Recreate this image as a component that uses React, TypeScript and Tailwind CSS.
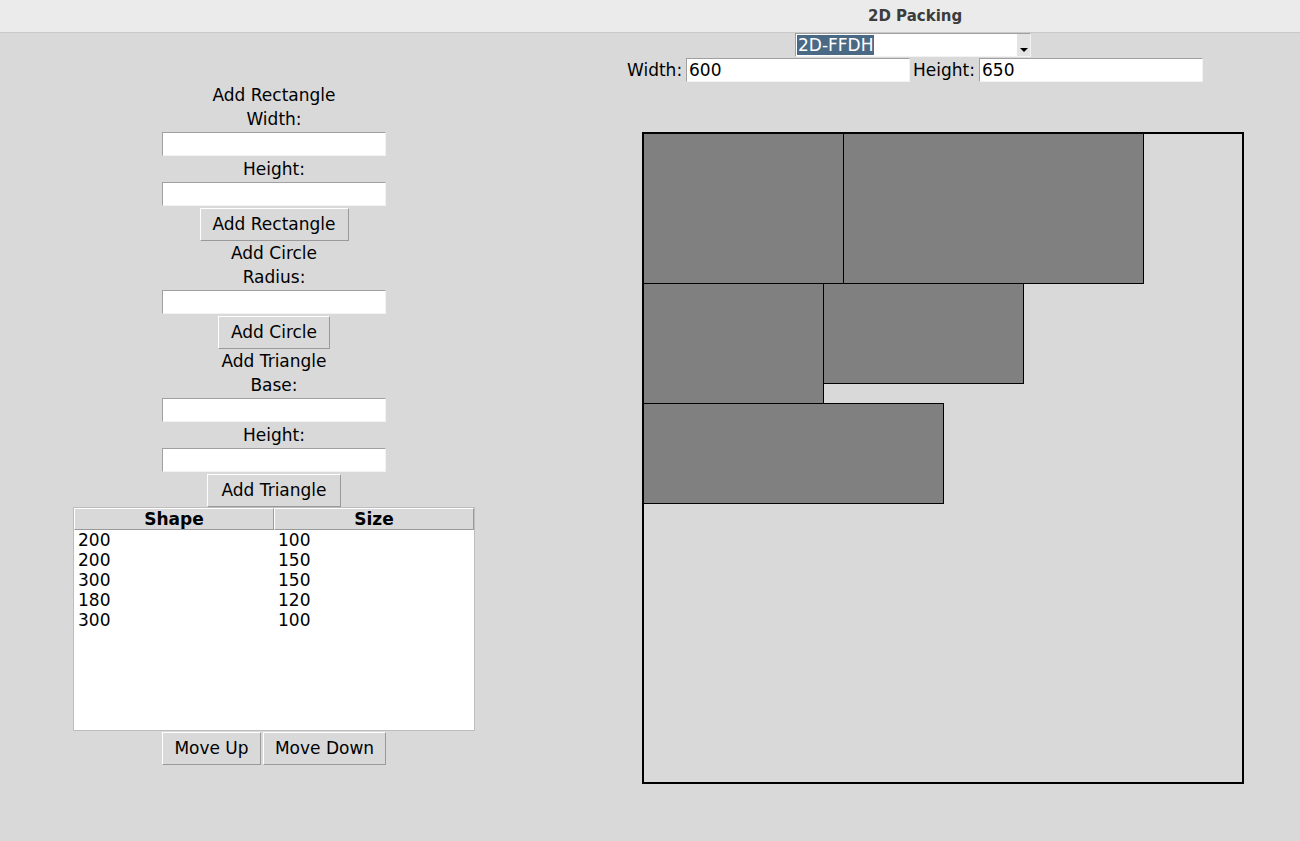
const rects = [
 { x: 1.5, y: 1.5, w: 200, h: 150 },
 { x: 201.5, y: 1.5, w: 300, h: 150 },
 { x: 1.5, y: 151.5, w: 180, h: 120 },
 { x: 181.5, y: 151.5, w: 200, h: 100 },
 { x: 1.5, y: 271.5, w: 300, h: 100 },
]

const rows = [
 ["200", "100"],
 ["200", "150"],
 ["300", "150"],
 ["180", "120"],
 ["300", "100"],
]

function Label({ text }: { text: string }){
 return <div className="h-[24px] flex items-center justify-center leading-none pt-[1px]">{text}</div>
}

function Entry({ value = "", width = "w-[224px]" }: { value?: string, width?: string }){
 return(
  <div className={`${width} h-[24px] shrink-0 bg-white border border-t-[#a0a0a0] border-l-[#a0a0a0] border-r-[#f2f2f2] border-b-[#f2f2f2] flex items-center px-[2px] leading-none`}>
   {value}
  </div>
 )
}

function Field(){
 return(
  <div className="h-[26px] flex items-center justify-center">
   <Entry />
  </div>
 )
}

function Btn({ text, width }: { text: string, width: string }){
 return(
  <div className={`${width} h-[33px] bg-[#d9d9d9] border border-t-white border-l-white border-r-[#9a9a9a] border-b-[#9a9a9a] flex items-center justify-center leading-none`}>
   {text}
  </div>
 )
}

export default function App(){

 return(

  <div className="w-[1300px] h-[841px] bg-[#d9d9d9] flex flex-col text-[17px] text-black overflow-hidden" style={{ fontFamily: '"DejaVu Sans", sans-serif' }}>

   <div className="h-[33px] shrink-0 bg-[#ebebeb] border-b border-[#c9c9c9] flex items-center pl-[868px]">
    <span className="font-bold text-[15px] text-[#3c3c3c] leading-none">2D Packing</span>
   </div>

   <div className="flex flex-1">

    {/* left side: shape inputs + list */}
    <div className="ml-[73px] w-[402px] pt-[50px] flex flex-col items-center">

     <Label text="Add Rectangle" />
     <Label text="Width:" />
     <Field />
     <Label text="Height:" />
     <Field />
     <div className="h-[34px] flex items-end"><Btn text="Add Rectangle" width="w-[149px]" /></div>

     <Label text="Add Circle" />
     <Label text="Radius:" />
     <Field />
     <div className="h-[34px] flex items-end"><Btn text="Add Circle" width="w-[112px]" /></div>

     <Label text="Add Triangle" />
     <Label text="Base:" />
     <Field />
     <Label text="Height:" />
     <Field />
     <div className="h-[34px] flex items-end"><Btn text="Add Triangle" width="w-[134px]" /></div>

     <div className="w-[402px] h-[224px] bg-white border border-[#bdbdbd] flex flex-col">
      <div className="flex h-[22px] shrink-0">
       <div className="w-[200px] bg-[#d9d9d9] border border-t-white border-l-white border-r-[#9a9a9a] border-b-[#9a9a9a] flex items-center justify-center font-bold leading-none">Shape</div>
       <div className="w-[200px] bg-[#d9d9d9] border border-t-white border-l-white border-r-[#9a9a9a] border-b-[#9a9a9a] flex items-center justify-center font-bold leading-none">Size</div>
      </div>
      {rows.map((r, i) => (
       <div key={i} className="flex h-[20px] items-center leading-none">
        <div className="w-[200px] pl-[4px]">{r[0]}</div>
        <div className="w-[200px] pl-[4px]">{r[1]}</div>
       </div>
      ))}
     </div>

     <div className="h-[34px] flex items-end gap-[2px]">
      <Btn text="Move Up" width="w-[99px]" />
      <Btn text="Move Down" width="w-[123px]" />
     </div>

    </div>

    {/* right side: algorithm + bin + canvas */}
    <div className="flex flex-col">

     <div className="ml-[320px] w-[236px] h-[24px] bg-white border border-t-[#a0a0a0] border-l-[#a0a0a0] border-r-[#f2f2f2] border-b-[#f2f2f2] flex items-center pl-[1px]">
      <span className="bg-[#4a6984] text-white h-[20px] px-[1px] flex items-center leading-none">2D-FFDH</span>
      <div className="ml-auto w-[13px] h-full bg-[#e3e3e3] flex items-end justify-center pb-[4px]">
       <div className="w-0 h-0 border-l-[4px] border-r-[4px] border-t-[4px] border-l-transparent border-r-transparent border-t-black"></div>
      </div>
     </div>

     <div className="ml-[152px] mt-[1px] flex items-center h-[24px]">
      <span className="w-[59px] shrink-0 leading-none">Width:</span>
      <Entry value="600" />
      <span className="w-[69px] shrink-0 pl-[3px] leading-none">Height:</span>
      <Entry value="650" />
     </div>

     <svg className="ml-[167px] mt-[50px]" width="602" height="652">
      <rect x="1" y="1" width="600" height="650" fill="#d9d9d9" stroke="#000" strokeWidth="2" />
      {rects.map((r, i) => (
       <rect key={i} x={r.x} y={r.y} width={r.w} height={r.h} fill="#808080" stroke="#000" strokeWidth="1" />
      ))}
     </svg>

    </div>

   </div>

  </div>

 )

}
